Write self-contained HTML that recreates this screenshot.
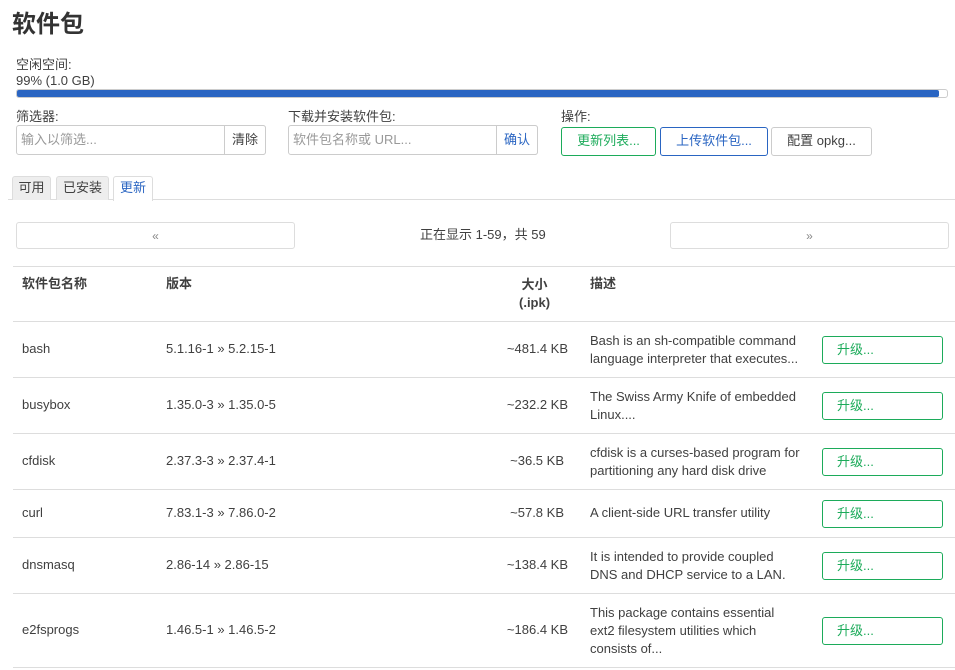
<!DOCTYPE html>
<html><head><meta charset="utf-8"><style>
*{box-sizing:border-box;margin:0;padding:0}
body{width:955px;height:670px;overflow:hidden;background:#fff;font-family:"Liberation Sans","Noto Sans CJK SC",sans-serif;font-size:13px;line-height:16px;color:#404040;position:relative}
.a{position:absolute;white-space:nowrap}
.inp{position:absolute;border:1px solid #ccc;border-radius:3px;height:30px;background:#fff}
.btn{position:absolute;border:1px solid #ccc;border-radius:3px;background:#fff;text-align:center;line-height:26px;height:29px}
.hl{position:absolute;left:13px;width:942px;height:1px;background:#ddd}
.up{position:absolute;left:822px;width:121px;height:28px;border:1px solid #1cab5a;border-radius:3px;color:#1cab5a;line-height:25px;padding-left:14px}
</style></head><body>
<div class="a" style="left:12px;top:10px;font-size:24px;line-height:30px;font-weight:bold;color:#333">软件包</div>
<div class="a" style="left:16px;top:57px">空闲空间:</div>
<div class="a" style="left:16px;top:73px">99% (1.0 GB)</div>
<div class="a" style="left:16px;top:89px;width:932px;height:9px;border:1px solid #ccc;border-radius:3px"></div>
<div class="a" style="left:17px;top:90px;width:922px;height:7px;background:#2a65c2;border-radius:2px"></div>

<div class="a" style="left:16px;top:109px">筛选器:</div>
<div class="inp" style="left:16px;top:125px;width:250px"></div>
<div class="a" style="left:21px;top:132px;color:#999">输入以筛选...</div>
<div class="a" style="left:224px;top:125px;width:42px;height:30px;line-height:28px;text-align:center;border-radius:0 3px 3px 0;border:1px solid #ccc;background:#fff">清除</div>
<div class="a" style="left:288px;top:109px">下载并安装软件包:</div>
<div class="inp" style="left:288px;top:125px;width:250px"></div>
<div class="a" style="left:293px;top:132px;color:#999">软件包名称或 URL...</div>
<div class="a" style="left:496px;top:125px;width:42px;height:30px;border:1px solid #ccc;border-radius:0 3px 3px 0;line-height:28px;text-align:center;color:#2a65c2;background:#fff">确认</div>
<div class="a" style="left:561px;top:109px">操作:</div>
<div class="btn" style="left:561px;top:127px;width:95px;border-color:#1cab5a;color:#1cab5a">更新列表...</div>
<div class="btn" style="left:660px;top:127px;width:108px;border-color:#2a65c2;color:#2a65c2">上传软件包...</div>
<div class="btn" style="left:771px;top:127px;width:101px">配置 opkg...</div>

<div class="a" style="left:8px;top:199px;width:947px;height:1px;background:#ddd"></div>
<div class="a" style="left:12px;top:176px;width:39px;height:24px;border:1px solid #ddd;border-bottom:none;background:#eee;border-radius:3px 3px 0 0;text-align:center;line-height:21px">可用</div>
<div class="a" style="left:56px;top:176px;width:53px;height:24px;border:1px solid #ddd;border-bottom:none;background:#eee;border-radius:3px 3px 0 0;text-align:center;line-height:21px">已安装</div>
<div class="a" style="left:113px;top:176px;width:40px;height:25px;border:1px solid #ddd;border-bottom:none;background:#fff;border-radius:3px 3px 0 0;text-align:center;line-height:21px;color:#2a65c2">更新</div>

<div class="a" style="left:16px;top:222px;width:279px;height:27px;border:1px solid #ddd;border-radius:3px;text-align:center;line-height:26px;color:#888;font-size:12px">«</div>
<div class="a" style="left:420px;top:227px">正在显示 1-59，共 59</div>
<div class="a" style="left:670px;top:222px;width:279px;height:27px;border:1px solid #ddd;border-radius:3px;text-align:center;line-height:26px;color:#888;font-size:12px">»</div>

<div class="hl" style="top:266px"></div>
<div class="a" style="left:22px;top:276px;font-weight:bold">软件包名称</div>
<div class="a" style="left:166px;top:276px;font-weight:bold">版本</div>
<div class="a" style="left:519px;top:276px;font-weight:bold;text-align:center;line-height:18px">大小<br>(.ipk)</div>
<div class="a" style="left:590px;top:276px;font-weight:bold">描述</div>
<div class="hl" style="top:321px"></div>

<div class="a" style="left:22px;top:341px">bash</div><div class="a" style="left:166px;top:341px">5.1.16-1 » 5.2.15-1</div><div class="a" style="right:387px;top:341px">~481.4 KB</div><div class="a" style="left:590px;top:332px;line-height:18px">Bash is an sh-compatible command<br>language interpreter that executes...</div><div class="up" style="top:336px">升级...</div>
<div class="hl" style="top:377px"></div>
<div class="a" style="left:22px;top:397px">busybox</div><div class="a" style="left:166px;top:397px">1.35.0-3 » 1.35.0-5</div><div class="a" style="right:387px;top:397px">~232.2 KB</div><div class="a" style="left:590px;top:388px;line-height:18px">The Swiss Army Knife of embedded<br>Linux....</div><div class="up" style="top:392px">升级...</div>
<div class="hl" style="top:433px"></div>
<div class="a" style="left:22px;top:453px">cfdisk</div><div class="a" style="left:166px;top:453px">2.37.3-3 » 2.37.4-1</div><div class="a" style="right:391px;top:453px">~36.5 KB</div><div class="a" style="left:590px;top:444px;line-height:18px">cfdisk is a curses-based program for<br>partitioning any hard disk drive</div><div class="up" style="top:448px">升级...</div>
<div class="hl" style="top:489px"></div>
<div class="a" style="left:22px;top:505px">curl</div><div class="a" style="left:166px;top:505px">7.83.1-3 » 7.86.0-2</div><div class="a" style="right:391px;top:505px">~57.8 KB</div><div class="a" style="left:590px;top:505px">A client-side URL transfer utility</div><div class="up" style="top:500px">升级...</div>
<div class="hl" style="top:537px"></div>
<div class="a" style="left:22px;top:557px">dnsmasq</div><div class="a" style="left:166px;top:557px">2.86-14 » 2.86-15</div><div class="a" style="right:387px;top:557px">~138.4 KB</div><div class="a" style="left:590px;top:548px;line-height:18px">It is intended to provide coupled<br>DNS and DHCP service to a LAN.</div><div class="up" style="top:552px">升级...</div>
<div class="hl" style="top:593px"></div>
<div class="a" style="left:22px;top:622px">e2fsprogs</div><div class="a" style="left:166px;top:622px">1.46.5-1 » 1.46.5-2</div><div class="a" style="right:387px;top:622px">~186.4 KB</div><div class="a" style="left:590px;top:604px;line-height:18px">This package contains essential<br>ext2 filesystem utilities which<br>consists of...</div><div class="up" style="top:617px">升级...</div>
<div class="hl" style="top:667px"></div>
</body></html>
